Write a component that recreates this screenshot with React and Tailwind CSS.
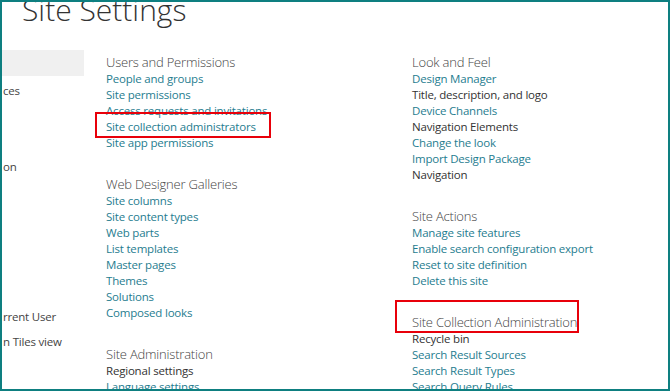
const SECTIONS_LEFT = [
  {
    title: 'Users and Permissions',
    items: [
      { label: 'People and groups' },
      { label: 'Site permissions' },
      { label: 'Access requests and invitations' },
      { label: 'Site collection administrators', mark: true },
      { label: 'Site app permissions' },
    ],
  },
  {
    title: 'Web Designer Galleries',
    items: [
      { label: 'Site columns' },
      { label: 'Site content types' },
      { label: 'Web parts' },
      { label: 'List templates' },
      { label: 'Master pages' },
      { label: 'Themes' },
      { label: 'Solutions' },
      { label: 'Composed looks' },
    ],
  },
  {
    title: 'Site Administration',
    items: [{ label: 'Regional settings', dark: true }, { label: 'Language settings' }],
  },
]

const SECTIONS_RIGHT = [
  {
    title: 'Look and Feel',
    items: [
      { label: 'Design Manager' },
      { label: 'Title, description, and logo', dark: true },
      { label: 'Device Channels' },
      { label: 'Navigation Elements', dark: true },
      { label: 'Change the look' },
      { label: 'Import Design Package' },
      { label: 'Navigation', dark: true },
    ],
  },
  {
    title: 'Site Actions',
    items: [
      { label: 'Manage site features' },
      { label: 'Enable search configuration export' },
      { label: 'Reset to site definition' },
      { label: 'Delete this site' },
    ],
  },
  {
    title: 'Site Collection Administration',
    mark: true,
    items: [
      { label: 'Recycle bin', dark: true },
      { label: 'Search Result Sources' },
      { label: 'Search Result Types' },
      { label: 'Search Query Rules' },
    ],
  },
]

function Section({ section, first }) {
  return (
    <div className={first ? '' : 'mt-[25px]'}>
      <div className="relative text-[13px] leading-[16px] font-light tracking-[-0.2px] text-[#444]">
        {section.title}
        {section.mark && (
          <span className="absolute left-[-17px] top-[-14px] h-[33px] w-[184px] border-2 border-[#e8000a]" />
        )}
      </div>
      <ul className="mt-[1px]">
        {section.items.map((it) => (
          <li
            key={it.label}
            className={`relative text-[11.5px] leading-[16px] tracking-[-0.2px] ${it.dark ? 'text-[#333]' : 'text-[#1f7d8f]'}`}
          >
            {it.label}
            {it.mark && (
              <span className="absolute left-[-11px] top-[-7px] h-[26px] w-[176px] border-2 border-[#e8000a]" />
            )}
          </li>
        ))}
      </ul>
    </div>
  )
}

export default function App() {
  return (
    <div
      className="h-[391px] w-[670px] overflow-hidden border-2 border-[#0e7f80] bg-white"
      style={{ fontFamily: '"Open Sans", "Noto Sans", sans-serif' }}
    >
      <div className="h-[46px] overflow-hidden">
        <h1 className="ml-[20px] mt-[-12px] text-[30px] font-light leading-[40px] text-[#333]">Site Settings</h1>
      </div>
      <div className="flex">
        <nav className="w-[82px] text-[11.5px] tracking-[-0.2px] text-[#444]">
          <div className="mt-[2px] h-[26px] bg-[#f0f0f0]" />
          <div className="mt-[7px] leading-[16px] pl-[1px]">ces</div>
          <div className="mt-[60px] leading-[16px] pl-[1px]">on</div>
          <div className="mt-[134px] leading-[16px] pl-[1px]">rrent User</div>
          <div className="mt-[9px] leading-[16px] pl-[1px]">n Tiles view</div>
        </nav>
        <div className="ml-[22px] w-[306px] pt-[6px]">
          {SECTIONS_LEFT.map((s, i) => (
            <Section key={s.title} section={s} first={i === 0} />
          ))}
        </div>
        <div className="pt-[6px]">
          {SECTIONS_RIGHT.map((s, i) => (
            <Section key={s.title} section={s} first={i === 0} />
          ))}
        </div>
      </div>
    </div>
  )
}
